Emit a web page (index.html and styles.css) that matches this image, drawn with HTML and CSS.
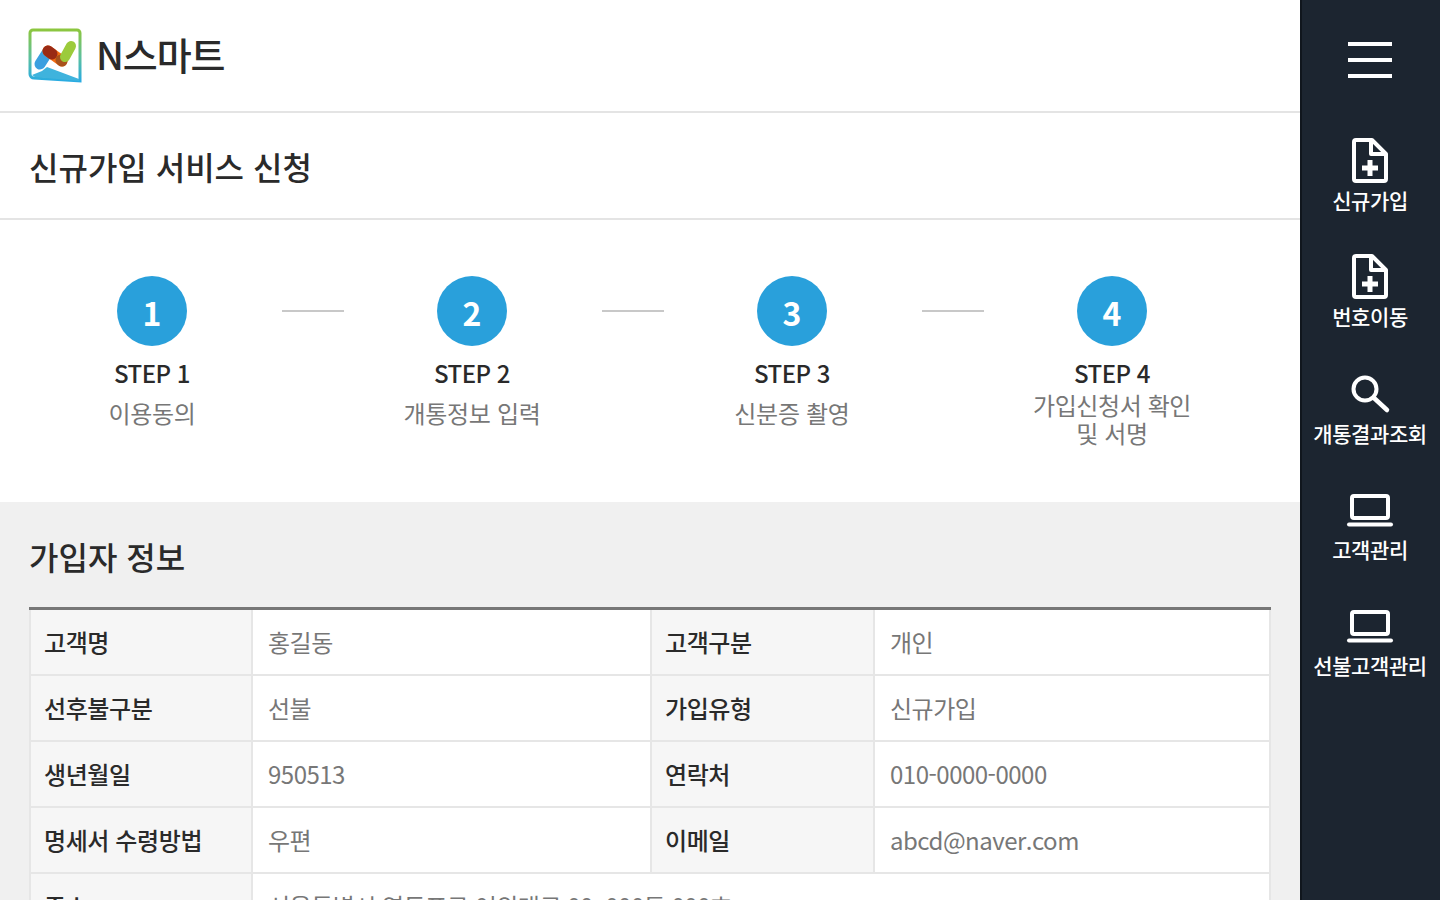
FILE: index.html
```html
<!DOCTYPE html>
<html lang="ko">
<head>
    <meta charset="UTF-8">
    <title>N스마트 - 신규가입 서비스 신청</title>
    <link rel="stylesheet" href="styles.css">
</head>
<body>
    <div class="wrap">
        <div class="main">
            <header class="header">
                <svg class="logo" viewBox="0 0 54 56">
                    <defs>
                        <linearGradient id="logoEdge" x1="0" y1="0" x2="0" y2="1">
                            <stop offset="0" stop-color="#8cc63f"/>
                            <stop offset="0.55" stop-color="#5cc0a0"/>
                            <stop offset="1" stop-color="#29abe2"/>
                        </linearGradient>
                    </defs>
                    <path d="M5 2h44a3 3 0 0 1 3 3v48L6 50a4 4 0 0 1-4-4V5a3 3 0 0 1 3-3z" fill="#fff" stroke="url(#logoEdge)" stroke-width="3"/>
                    <path d="M4 47l10-4 5-4 32 12v2L7 49z" fill="#3fb3dd"/>
                    <line x1="12" y1="36" x2="19" y2="25" stroke="#3b9fe0" stroke-width="11" stroke-linecap="round"/>
                    <line x1="20" y1="23" x2="34" y2="33" stroke="#f26c12" stroke-width="11" stroke-linecap="round"/>
                    <line x1="20" y1="23" x2="24" y2="26" stroke="#9a2a14" stroke-width="11" stroke-linecap="round"/>
                    <line x1="33" y1="32" x2="34" y2="33" stroke="#a8521c" stroke-width="11" stroke-linecap="round"/>
                    <line x1="37" y1="29" x2="43" y2="18" stroke="#9ccb3b" stroke-width="10" stroke-linecap="round"/>
                </svg>
                <span class="brand">N스마트</span>
            </header>

            <div class="page-title">
                <h1>신규가입 서비스 신청</h1>
            </div>

            <div class="steps">
                <div class="step">
                    <div class="step-num">1</div>
                    <div class="step-name">STEP 1</div>
                    <div class="step-desc">이용동의</div>
                </div>
                <div class="step-line"></div>
                <div class="step">
                    <div class="step-num">2</div>
                    <div class="step-name">STEP 2</div>
                    <div class="step-desc">개통정보 입력</div>
                </div>
                <div class="step-line"></div>
                <div class="step">
                    <div class="step-num">3</div>
                    <div class="step-name">STEP 3</div>
                    <div class="step-desc">신분증 촬영</div>
                </div>
                <div class="step-line"></div>
                <div class="step">
                    <div class="step-num">4</div>
                    <div class="step-name">STEP 4</div>
                    <div class="step-desc step-desc-long">가입신청서 확인<br>및 서명</div>
                </div>
            </div>

            <section class="info">
                <h2>가입자 정보</h2>
                <table class="info-table">
                    <colgroup>
                        <col class="col-first">
                        <col class="col-value">
                        <col class="col-label">
                        <col>
                    </colgroup>
                    <tr>
                        <th>고객명</th>
                        <td>홍길동</td>
                        <th>고객구분</th>
                        <td>개인</td>
                    </tr>
                    <tr>
                        <th>선후불구분</th>
                        <td>선불</td>
                        <th>가입유형</th>
                        <td>신규가입</td>
                    </tr>
                    <tr>
                        <th>생년월일</th>
                        <td>950513</td>
                        <th>연락처</th>
                        <td>010-0000-0000</td>
                    </tr>
                    <tr>
                        <th>명세서 수령방법</th>
                        <td>우편</td>
                        <th>이메일</th>
                        <td>abcd@naver.com</td>
                    </tr>
                    <tr>
                        <th>주소</th>
                        <td colspan="3">서울특별시 영등포구 여의대로 00, 000동 000호</td>
                    </tr>
                </table>
            </section>
        </div>

        <nav class="side">
            <div class="burger">
                <span></span>
                <span></span>
                <span></span>
            </div>
            <a class="side-item">
                <svg class="side-icon" viewBox="0 0 54 54"><path d="M13 6h16l14 14v25a2 2 0 0 1-2 2H13a2 2 0 0 1-2-2V8a2 2 0 0 1 2-2z M28 6v14h15" fill="none" stroke="#fff" stroke-width="4" stroke-linejoin="round"/><path d="M27 26v16M19 34h16" stroke="#fff" stroke-width="5"/></svg>
                <span>신규가입</span>
            </a>
            <a class="side-item">
                <svg class="side-icon" viewBox="0 0 54 54"><path d="M13 6h16l14 14v25a2 2 0 0 1-2 2H13a2 2 0 0 1-2-2V8a2 2 0 0 1 2-2z M28 6v14h15" fill="none" stroke="#fff" stroke-width="4" stroke-linejoin="round"/><path d="M27 26v16M19 34h16" stroke="#fff" stroke-width="5"/></svg>
                <span>번호이동</span>
            </a>
            <a class="side-item">
                <svg class="side-icon" viewBox="0 0 54 54"><circle cx="22" cy="22" r="11.5" fill="none" stroke="#fff" stroke-width="4"/><path d="M31 31l13 12" stroke="#fff" stroke-width="4.500" stroke-linecap="round"/></svg>
                <span>개통결과조회</span>
            </a>
            <a class="side-item">
                <svg class="side-icon" viewBox="0 0 54 54"><rect x="9" y="13" width="36" height="22" rx="2" fill="none" stroke="#fff" stroke-width="4"/><path d="M6 41.500h42" stroke="#fff" stroke-width="4" stroke-linecap="round"/></svg>
                <span>고객관리</span>
            </a>
            <a class="side-item">
                <svg class="side-icon" viewBox="0 0 54 54"><rect x="9" y="13" width="36" height="22" rx="2" fill="none" stroke="#fff" stroke-width="4"/><path d="M6 41.500h42" stroke="#fff" stroke-width="4" stroke-linecap="round"/></svg>
                <span>선불고객관리</span>
            </a>
        </nav>
    </div>
</body>
</html>
```

FILE: styles.css
```css
* {
    margin: 0;
    padding: 0;
    box-sizing: border-box;
}

html, body {
    height: 900px;
    overflow: hidden;
}

body {
    font-family: "Noto Sans CJK KR", "Noto Sans", sans-serif;
    background: #fff;
    color: #222;
}

.wrap {
    display: flex;
    height: 900px;
}

.main {
    width: 1300px;
    height: 900px;
    overflow: hidden;
}

.header {
    display: flex;
    align-items: center;
    gap: 14px;
    height: 113px;
    padding-left: 28px;
    border-bottom: 2px solid #e4e4e4;
}

.logo {
    width: 54px;
    height: 56px;
}

.brand {
    margin-top: -5px;
    font-size: 38px;
    font-weight: 500;
    letter-spacing: -1.1px;
    color: #2a2a2a;
}

.page-title {
    display: flex;
    align-items: center;
    height: 107px;
    padding-left: 29px;
    border-bottom: 2px solid #e4e4e4;
}

.page-title h1 {
    font-size: 32px;
    font-weight: 500;
    color: #2a2a2a;
}

.steps {
    display: flex;
    align-items: flex-start;
    height: 282px;
    padding: 56px 0 0 23px;
}

.step {
    width: 258px;
    text-align: center;
}

.step-num {
    width: 70px;
    height: 70px;
    margin: 0 auto 12px;
    border-radius: 50%;
    background: #29a0db;
    color: #fff;
    font-size: 32px;
    font-weight: 700;
    line-height: 72px;
}

.step-name {
    font-size: 24px;
    font-weight: 500;
    line-height: 30px;
    letter-spacing: -0.5px;
    color: #2a2a2a;
}

.step-desc {
    margin-top: 11px;
    font-size: 24px;
    line-height: 28px;
    letter-spacing: -0.3px;
    color: #777;
}

.step-desc-long {
    margin-top: 3px;
    letter-spacing: -0.4px;
}

.step-line {
    width: 62px;
    height: 2px;
    margin-top: 34px;
    margin-left: 1px;
    margin-right: -1px;
    background: #c8c8c8;
}

.info {
    height: 398px;
    padding: 0 29px;
    background: #f0f0f0;
}

.info h2 {
    height: 105px;
    padding-top: 30px;
    font-size: 32px;
    font-weight: 500;
    line-height: 48px;
    color: #2a2a2a;
}

.info-table {
    width: 100%;
    border-collapse: collapse;
    table-layout: fixed;
    background: #fff;
    border-top: 3px solid #777;
    font-size: 24px;
}

.col-first {
    width: 222px;
}

.col-label {
    width: 223px;
}

.col-value {
    width: 399px;
}

.info-table th,
.info-table td {
    height: 66px;
    padding: 0 14px;
    border: 2px solid #e6e6e6;
    text-align: left;
    letter-spacing: -0.5px;
}

.info-table tr:first-child th,
.info-table tr:first-child td {
    border-top: none;
}

.info-table th {
    padding-left: 13px;
    background: #f6f6f6;
    font-weight: 500;
    letter-spacing: -0.4px;
    color: #2a2a2a;
}

.info-table td {
    padding-left: 15px;
    color: #777;
}

.side {
    width: 140px;
    height: 900px;
    padding-right: 2px;
    background: #1c2530;
    border-left: 2px solid #10161d;
}

.burger {
    display: flex;
    flex-direction: column;
    gap: 12px;
    width: 44px;
    height: 128px;
    margin: 0 auto;
    padding-top: 42px;
}

.burger span {
    display: block;
    height: 4px;
    background: #fff;
}

.side-item {
    display: flex;
    flex-direction: column;
    align-items: center;
    height: 116.25px;
    color: #fff;
    font-size: 21px;
    font-weight: 500;
    line-height: 30px;
    letter-spacing: -0.4px;
    white-space: nowrap;
}

.side-icon {
    flex: none;
    width: 54px;
    height: 54px;
    margin-top: 6px;
    margin-bottom: -3px;
}
```
